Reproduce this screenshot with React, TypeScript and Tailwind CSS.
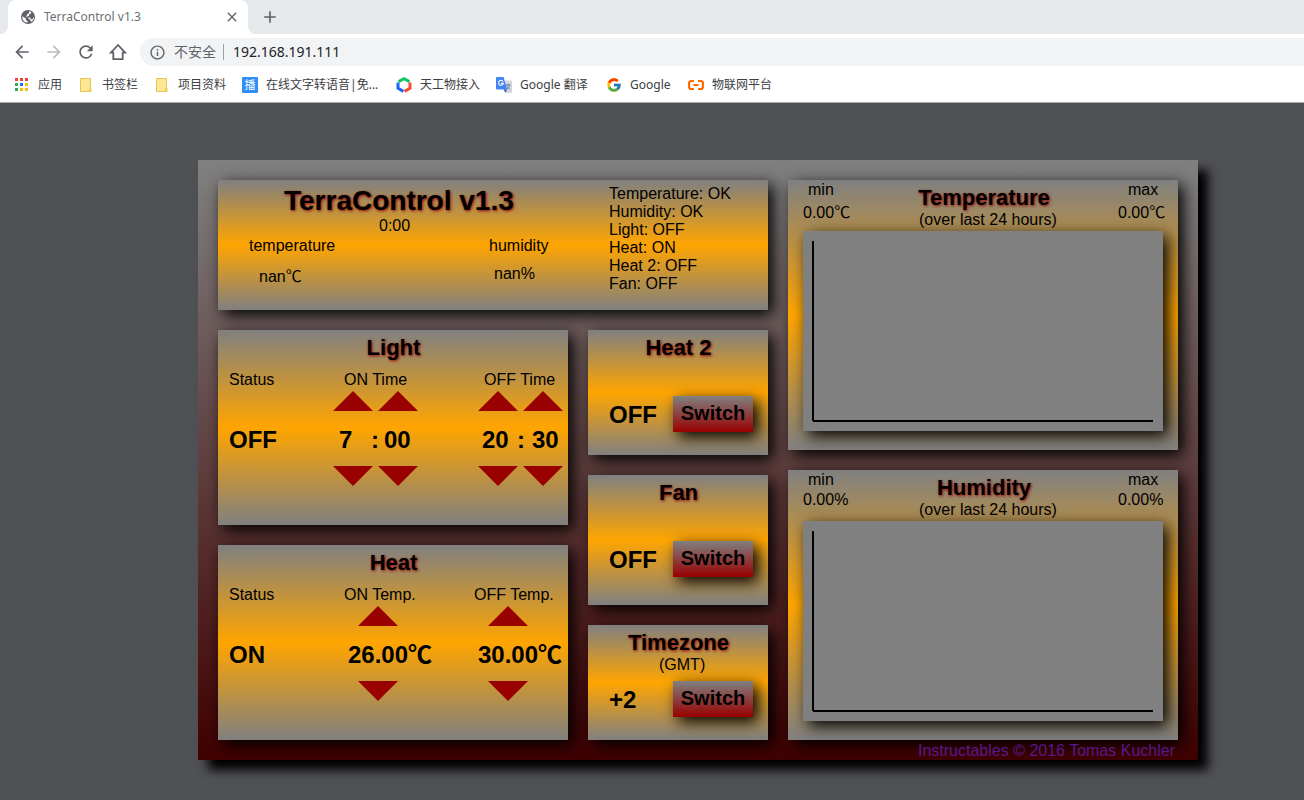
import type { ReactNode } from "react";
import { FcGoogle } from "react-icons/fc";
import { MdAdd, MdArrowBack, MdArrowForward, MdClose, MdInfoOutline, MdRefresh } from "react-icons/md";

const UI_FONT = "font-['Noto_Sans','Noto_Sans_CJK_SC',sans-serif]";

/* ---------- Browser chrome ---------- */

function GlobeIcon() {
  return (
    <svg width="16" height="16" viewBox="0 0 16 16" aria-hidden="true">
      <circle cx="8" cy="8" r="7" fill="#5f6368" />
      <path d="M9.200 2.300 11.400 3l-.6 1.600-1.500.6-.4 1.600-2 .6v1.200h3.200l.8 1.600h1.700l1.300-2.400.1 1.600-2 3.200-1.200-.2-.6-1.600-1.600-1.200L6 7.600 7.300 5.600 9 4z" fill="#fff" />
      <path d="M2.300 7.200 5.800 9.600v1.300L7.400 12v1.700C4.300 13.400 2 10.800 2.300 7.200z" fill="#fff" />
    </svg>
  );
}

function HomeIcon() {
  return (
    <svg width="18" height="18" viewBox="0 0 18 18" fill="none" stroke="#5f6368" strokeWidth="1.8" aria-hidden="true">
      <path d="M9 2 1.900 9.600h2.400v6.500h9.400V9.600h2.400z" />
    </svg>
  );
}

function AppsIcon() {
  const colors = ["#ea4335", "#ea4335", "#ea4335", "#34a853", "#1a73e8", "#fbbc04", "#34a853", "#fbbc04", "#fbbc04"];
  return (
    <svg width="16" height="16" viewBox="0 0 16 16" aria-hidden="true">
      {colors.map((c, i) => (
        <rect key={i} x={1 + (i % 3) * 5} y={1 + Math.floor(i / 3) * 5} width="3" height="3" fill={c} />
      ))}
    </svg>
  );
}

function FolderIcon() {
  return (
    <svg width="16" height="16" viewBox="0 0 16 16" aria-hidden="true">
      <path d="M2.500 1.500h10v9.500l.5.5v3h-10.500z" fill="#ffe694" stroke="#e6c651" />
      <path d="M11.500 14.500v-3.500" fill="none" stroke="#e6c651" />
    </svg>
  );
}

function BroadcastIcon() {
  return (
    <span className="flex size-4 items-center justify-center rounded-[1px] bg-[#2f8ff5] text-[11px] leading-4 text-white">
      播
    </span>
  );
}

function HexagonIcon() {
  return (
    <svg width="16" height="16" viewBox="0 0 16 16" fill="none" strokeWidth="3" aria-hidden="true">
      <path d="M2.500 4.600 8 1.700l5.500 2.900" stroke="#13c662" />
      <path d="M2 5.400v5.800L7.400 14.400" stroke="#1468f5" />
      <path d="M14 5.400v5.800L8.600 14.400" stroke="#fa4b2d" />
    </svg>
  );
}

function TranslateIcon() {
  return (
    <svg width="16" height="16" viewBox="0 0 16 16" fill="none" aria-hidden="true">
      <path d="M6 3.500h9.400a.6.6 0 0 1 .6.6V15a1 1 0 0 1-1 1H9.800z" fill="#d5d7da" />
      <path d="M9.500 8h5M12 6.800V8m1.800 0c-.4 2-1.800 3.400-3.400 4.200M10.800 8.800c.5 1.500 1.600 2.700 3 3.400" stroke="#5f7fa8" />
      <path d="M1 0h6.600L11 12.500H1a1 1 0 0 1-1-1V1a1 1 0 0 1 1-1z" fill="#4285f4" />
      <path d="M7.600 12.500H11L9.400 15.800z" fill="#2a56c6" />
      <path d="M7 4.500A2.400 2.400 0 1 0 7.300 6.400H5" stroke="#fff" strokeWidth="1.100" />
    </svg>
  );
}

function LinkIcon() {
  return (
    <svg width="16" height="16" viewBox="0 0 16 16" fill="none" stroke="#ff6a00" strokeWidth="2.200" aria-hidden="true">
      <path d="M6 4H3.100a2 2 0 0 0-2 2v4a2 2 0 0 0 2 2H6M10 4h2.900a2 2 0 0 1 2 2v4a2 2 0 0 1-2 2H10M5.500 8h5" />
    </svg>
  );
}

function NavButton({ label, children }: { label: string; children: ReactNode }) {
  return (
    <button type="button" aria-label={label} className="flex size-8 items-center justify-center text-[#5f6368]">
      {children}
    </button>
  );
}

function Bookmark({ icon, label, labelClass = "" }: { icon: ReactNode; label: string; labelClass?: string }) {
  return (
    <a href="#" className="flex items-center gap-2 whitespace-nowrap">
      <span className="flex size-4 items-center justify-center">{icon}</span>
      <span className={labelClass}>{label}</span>
    </a>
  );
}

function BrowserChrome() {
  return (
    <header className={`border-b border-[#a6a8ab] bg-white ${UI_FONT}`}>
      <div className="flex h-[34px] bg-[#e5e9ec]">
        <div className="flex w-2 bg-white">
          <div className="flex-1 rounded-br-lg bg-[#e5e9ec]" />
        </div>
        <div className="flex w-60 bg-[#e5e9ec]">
          <div className="flex flex-1 items-center rounded-t-lg bg-white pr-2 pl-3 text-xs text-[#6b6f74]">
            <GlobeIcon />
            <span className="flex-1 pl-2">TerraControl v1.3</span>
            <button type="button" aria-label="关闭" className="text-[#5f6368]">
              <MdClose size={16} />
            </button>
          </div>
        </div>
        <div className="flex flex-1 bg-white">
          <div className="flex flex-1 items-center rounded-bl-lg bg-[#e5e9ec] pl-3">
            <button type="button" aria-label="新标签页" className="text-[#5f6368]">
              <MdAdd size={20} />
            </button>
          </div>
        </div>
      </div>
      <div className="flex h-9 items-center pl-[6px]">
        <NavButton label="后退"><MdArrowBack size={20} /></NavButton>
        <NavButton label="前进"><MdArrowForward size={20} className="text-[#babcbe]" /></NavButton>
        <NavButton label="重新加载"><MdRefresh size={20} /></NavButton>
        <NavButton label="主页"><HomeIcon /></NavButton>
        <div className="ml-[6px] flex h-7 flex-1 items-center rounded-l-full bg-[#f1f3f4] pl-[9px] text-sm">
          <button type="button" className="flex items-center gap-2 text-[#5f6368]">
            <MdInfoOutline size={17} />
            不安全
          </button>
          <span className="mr-[9px] ml-[7px] h-4 w-px bg-[#9aa0a6]" />
          <input
            aria-label="地址"
            defaultValue="192.168.191.111"
            className="min-w-0 flex-1 bg-transparent text-[#202124] outline-none"
          />
        </div>
      </div>
      <nav className="flex h-8 items-center gap-4 pb-[3px] pl-[14px] text-xs text-[#3c4043]">
        <Bookmark icon={<AppsIcon />} label="应用" />
        <Bookmark icon={<FolderIcon />} label="书签栏" />
        <Bookmark icon={<FolderIcon />} label="项目资料" />
        <Bookmark icon={<BroadcastIcon />} label="在线文字转语音|免..." labelClass="w-[114px]" />
        <Bookmark icon={<HexagonIcon />} label="天工物接入" />
        <Bookmark icon={<TranslateIcon />} label="Google 翻译" labelClass="w-[70px]" />
        <Bookmark icon={<FcGoogle size={16} />} label="Google" labelClass="w-[42px]" />
        <Bookmark icon={<LinkIcon />} label="物联网平台" />
      </nav>
    </header>
  );
}

/* ---------- Dashboard ---------- */

const TITLE = "text-[22px] leading-[25px] font-bold [text-shadow:1px_1px_3px_#990000]";
const VALUE = "text-2xl leading-[27px] font-bold";

function Panel({ className = "", children }: { className?: string; children: ReactNode }) {
  return (
    <section
      className={`bg-linear-to-b/srgb from-[#808080] via-[#ffa500] to-[#808080] shadow-[5px_5px_15px_#000] ${className}`}
    >
      {children}
    </section>
  );
}

function Arrow({ label, down = false }: { label: string; down?: boolean }) {
  return (
    <button type="button" aria-label={label} className="block">
      <svg width="40" height="20" viewBox="0 0 40 20" fill="#990000" className="block" aria-hidden="true">
        <path d={down ? "M0 0h40L20 20z" : "M0 20h40L20 0z"} />
      </svg>
    </button>
  );
}

function StatusColumn({ value }: { value: string }) {
  return (
    <div className="pl-[11px]">
      <p>Status</p>
      <p className={`mt-[37px] ${VALUE}`}>{value}</p>
    </div>
  );
}

function TimeColumn({
  label, hours, minutes, labelClass, valueClass,
}: { label: string; hours: string; minutes: string; labelClass: string; valueClass: string }) {
  return (
    <div>
      <p className={labelClass}>{label}</p>
      <div className="mt-[2px] flex gap-[5px]">
        <Arrow label={`${label} hours up`} />
        <Arrow label={`${label} minutes up`} />
      </div>
      <p className={`mt-[15px] grid ${VALUE} ${valueClass}`}>
        <span>{hours}</span>
        <span>:</span>
        <span>{minutes}</span>
      </p>
      <div className="mt-[13px] flex gap-[5px]">
        <Arrow down label={`${label} hours down`} />
        <Arrow down label={`${label} minutes down`} />
      </div>
    </div>
  );
}

function TempColumn({ label, value }: { label: string; value: string }) {
  return (
    <div className="whitespace-nowrap">
      <p className="pl-[11px]">{label}</p>
      <div className="mt-[2px] pl-[25px]"><Arrow label={`${label} up`} /></div>
      <p className={`mt-[15px] pl-[15px] ${VALUE}`}>{value}</p>
      <div className="mt-[13px] pl-[25px]"><Arrow down label={`${label} down`} /></div>
    </div>
  );
}

function SwitchRow({ value, className }: { value: string; className: string }) {
  return (
    <div className={`flex items-center justify-between pr-[15px] pl-[21px] ${className}`}>
      <span className={VALUE}>{value}</span>
      <button
        type="button"
        className="h-9 w-20 bg-linear-to-b/srgb from-[#808080] to-[#990000] pb-[2px] text-xl leading-[23px] font-bold shadow-[5px_5px_15px_#000]"
      >
        Switch
      </button>
    </div>
  );
}

function ChartPanel({ title, min, max, readingClass }: { title: string; min: string; max: string; readingClass: string }) {
  return (
    <Panel className="h-[270px] px-[15px]">
      <div className="grid h-[51px] grid-cols-[115px_200px_45px] whitespace-nowrap">
        <div className="pt-px">
          <p className="pl-[5px]">min</p>
          <p className={`pt-[2px] ${readingClass}`}>{min}</p>
        </div>
        <div className="pt-[5px]">
          <h2 className={`w-[132px] text-center ${TITLE}`}>{title}</h2>
          <p className="pt-px pl-px">(over last 24 hours)</p>
        </div>
        <div className="pt-px">
          <p className="pl-[10px]">max</p>
          <p className={`pt-[2px] ${readingClass}`}>{max}</p>
        </div>
      </div>
      <svg viewBox="0 0 360 200" className="block w-full bg-[#808080] shadow-[5px_5px_15px_#000]" role="img" aria-label={`${title} chart`}>
        <path d="M10 10v180M10 190h340" stroke="#000" strokeWidth="2" />
      </svg>
    </Panel>
  );
}

const CHECKS = ["Temperature: OK", "Humidity: OK", "Light: OFF", "Heat: ON", "Heat 2: OFF", "Fan: OFF"];

function Dashboard() {
  return (
    <main className="ml-[198px] max-w-[1000px] bg-linear-to-b/srgb from-[#808080] to-[#400000] px-5 pt-5 shadow-[10px_10px_10px_#000]">
      <div className="grid grid-cols-[minmax(0,550fr)_minmax(0,390fr)] gap-5">
        <div className="flex flex-col gap-5">
          <Panel className="grid h-[130px] grid-cols-[390px_1fr] pt-[5px] pl-px">
            <div>
              <h1 className="pl-[65px] text-[28px] leading-8 font-bold [text-shadow:1px_1px_3px_#990000]">
                TerraControl v1.3
              </h1>
              <p className="pl-40">0:00</p>
              <div className="mt-[2px] grid grid-cols-[240px_1fr] pl-[30px]">
                <div>
                  <p>temperature</p>
                  <p className="mt-[10px] pl-[10px] leading-6">nan℃</p>
                </div>
                <div>
                  <p>humidity</p>
                  <p className="mt-[10px] pl-[5px]">nan%</p>
                </div>
              </div>
            </div>
            <ul>
              {CHECKS.map((c) => (
                <li key={c}>{c}</li>
              ))}
            </ul>
          </Panel>
          <div className="grid grid-cols-[minmax(0,350fr)_minmax(0,180fr)] gap-5">
            <div className="flex flex-col gap-5">
              <Panel className="h-[195px] pt-[5px]">
                <h2 className={`pl-px text-center ${TITLE}`}>Light</h2>
                <div className="mt-[11px] grid grid-cols-[115px_145px_85px]">
                  <StatusColumn value="OFF" />
                  <TimeColumn
                    label="ON Time"
                    hours="7"
                    minutes="00"
                    labelClass="pl-[11px]"
                    valueClass="grid-cols-[32px_13px_1fr] pl-[6px]"
                  />
                  <TimeColumn
                    label="OFF Time"
                    hours="20"
                    minutes="30"
                    labelClass="pl-[6px]"
                    valueClass="grid-cols-[35px_15px_1fr] pl-1"
                  />
                </div>
              </Panel>
              <Panel className="h-[195px] pt-[5px]">
                <h2 className={`pl-px text-center ${TITLE}`}>Heat</h2>
                <div className="mt-[11px] grid grid-cols-[115px_130px_1fr]">
                  <StatusColumn value="ON" />
                  <TempColumn label="ON Temp." value="26.00℃" />
                  <TempColumn label="OFF Temp." value="30.00℃" />
                </div>
              </Panel>
            </div>
            <div className="flex flex-col gap-5">
              <Panel className="h-[125px] pt-[5px]">
                <h2 className={`pl-px text-center ${TITLE}`}>Heat 2</h2>
                <SwitchRow value="OFF" className="mt-9" />
              </Panel>
              <Panel className="h-[130px] pt-[5px]">
                <h2 className={`pl-px text-center ${TITLE}`}>Fan</h2>
                <SwitchRow value="OFF" className="mt-9" />
              </Panel>
              <Panel className="h-[115px] pt-[5px]">
                <h2 className={`pl-px text-center ${TITLE}`}>Timezone</h2>
                <p className="pt-px pl-[71px]">(GMT)</p>
                <SwitchRow value="+2" className="mt-[7px]" />
              </Panel>
            </div>
          </div>
        </div>
        <div className="flex flex-col gap-5">
          <ChartPanel title="Temperature" min="0.00℃" max="0.00℃" readingClass="leading-6" />
          <ChartPanel title="Humidity" min="0.00%" max="0.00%" readingClass="leading-[18px]" />
        </div>
      </div>
      <footer className="h-5 pt-[2px] pl-[700px]">
        <a href="#" className="whitespace-nowrap text-[#551a8b]">
          Instructables © 2016 Tomas Kuchler
        </a>
      </footer>
    </main>
  );
}

export default function App() {
  return (
    <div className="min-h-screen bg-[#505155]">
      <BrowserChrome />
      <div className="pt-[57px] pb-10 font-['Liberation_Sans','Noto_Sans_CJK_SC',sans-serif] text-base leading-[18px] text-black">
        <Dashboard />
      </div>
    </div>
  );
}
